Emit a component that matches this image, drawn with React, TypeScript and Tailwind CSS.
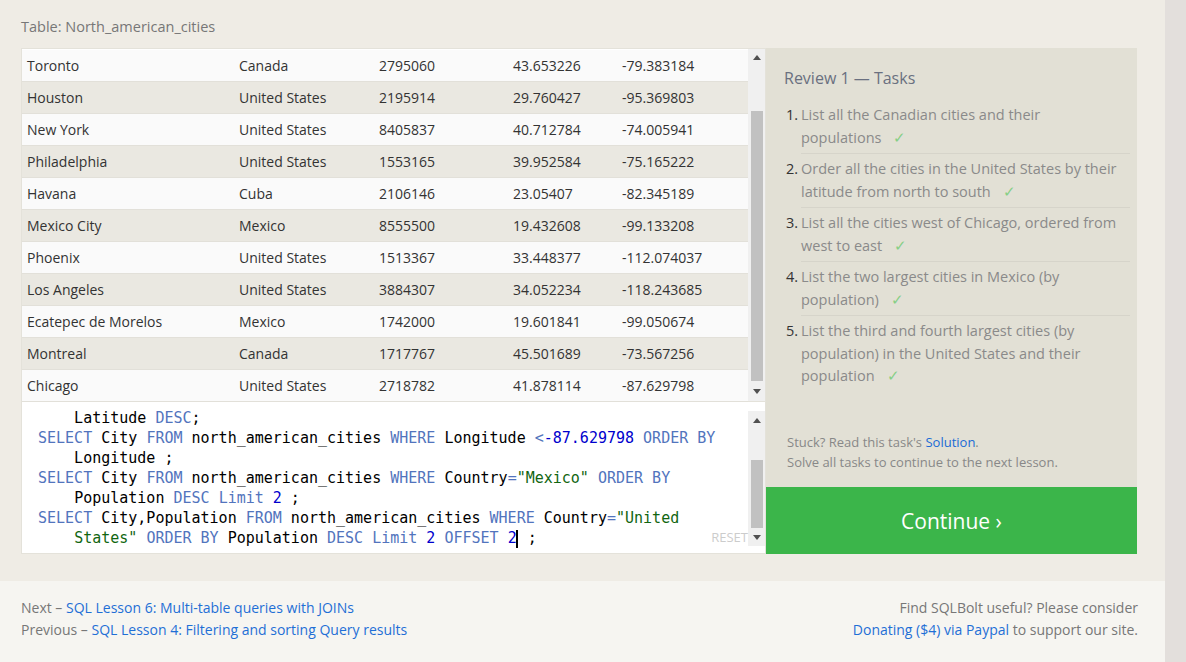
import React from "react";

type City = {
  name: string;
  country: string;
  population: string;
  latitude: string;
  longitude: string;
};

const cities: City[] = [
  { name: "Toronto", country: "Canada", population: "2795060", latitude: "43.653226", longitude: "-79.383184" },
  { name: "Houston", country: "United States", population: "2195914", latitude: "29.760427", longitude: "-95.369803" },
  { name: "New York", country: "United States", population: "8405837", latitude: "40.712784", longitude: "-74.005941" },
  { name: "Philadelphia", country: "United States", population: "1553165", latitude: "39.952584", longitude: "-75.165222" },
  { name: "Havana", country: "Cuba", population: "2106146", latitude: "23.05407", longitude: "-82.345189" },
  { name: "Mexico City", country: "Mexico", population: "8555500", latitude: "19.432608", longitude: "-99.133208" },
  { name: "Phoenix", country: "United States", population: "1513367", latitude: "33.448377", longitude: "-112.074037" },
  { name: "Los Angeles", country: "United States", population: "3884307", latitude: "34.052234", longitude: "-118.243685" },
  { name: "Ecatepec de Morelos", country: "Mexico", population: "1742000", latitude: "19.601841", longitude: "-99.050674" },
  { name: "Montreal", country: "Canada", population: "1717767", latitude: "45.501689", longitude: "-73.567256" },
  { name: "Chicago", country: "United States", population: "2718782", latitude: "41.878114", longitude: "-87.629798" },
];

const tasks: string[][] = [
  ["List all the Canadian cities and their", "populations"],
  ["Order all the cities in the United States by their", "latitude from north to south"],
  ["List all the cities west of Chicago, ordered from", "west to east"],
  ["List the two largest cities in Mexico (by", "population)"],
  ["List the third and fourth largest cities (by", "population) in the United States and their", "population"],
];

const sans = "font-['Open_Sans','Noto_Sans',sans-serif]";

// editor token helpers
const K = ({ children }: { children: React.ReactNode }) => (
  <span className="text-[#5274bd]">{children}</span>
);
const N = ({ children }: { children: React.ReactNode }) => (
  <span className="text-[#0000cd]">{children}</span>
);
const S = ({ children }: { children: React.ReactNode }) => (
  <span className="text-[#116611]">{children}</span>
);

function ArrowUp() {
  return (
    <svg width="8" height="5" viewBox="0 0 8 5">
      <path d="M0 5 L4 0 L8 5 Z" fill="#505050" />
    </svg>
  );
}

function ArrowDown({ color = "#505050" }: { color?: string }) {
  return (
    <svg width="8" height="5" viewBox="0 0 8 5">
      <path d="M0 0 L8 0 L4 5 Z" fill={color} />
    </svg>
  );
}

export default function App() {
  return (
    <div className={`w-[1186px] h-[662px] flex bg-[#e3dfdc] overflow-hidden ${sans}`}>
      <div className="w-[1165px] flex flex-col">
        <main className="bg-[#efece5] px-[21px] pt-[17px] pb-[27px]">
          <div className="text-[14.5px] leading-[20px] text-[#777] mb-[11px]">
            Table: North_american_cities
          </div>

          <div className="flex">
            {/* Left: table + editor */}
            <div className="w-[745px] border border-[#e4e2da] bg-white">
              {/* Table */}
              <div className="flex h-[353px] border-b border-[#e4e2da]">
                <div className="flex-1 pt-[1px]">
                  {cities.map((c, i) => (
                    <div
                      key={c.name}
                      className={`grid grid-cols-[212px_140px_134px_109px_1fr] h-[32px] items-center pl-[5px] text-[14px] text-[#333] border-b border-[#e2e0d9] ${
                        i % 2 === 0 ? "bg-[#fafafa]" : "bg-[#eae8e1]"
                      }`}
                    >
                      <span>{c.name}</span>
                      <span>{c.country}</span>
                      <span>{c.population}</span>
                      <span>{c.latitude}</span>
                      <span>{c.longitude}</span>
                    </div>
                  ))}
                </div>
                <div className="w-[17px] bg-[#f0f0f0] flex flex-col items-center">
                  <div className="h-[14px] flex items-center justify-center pt-[2px]">
                    <ArrowUp />
                  </div>
                  <div className="mt-[48px] w-[12px] h-[270px] bg-[#c1c1c1]" />
                  <div className="flex-1 flex items-center justify-center">
                    <ArrowDown />
                  </div>
                </div>
              </div>

              {/* Editor */}
              <div className="relative h-[151px] flex">
                <div className="flex-1 pl-[16px] pt-[6px] font-['DejaVu_Sans_Mono','Liberation_Mono',monospace] text-[15px] leading-[20px] text-black whitespace-pre">
                  <div>    Latitude <K>DESC</K>;</div>
                  <div>
                    <K>SELECT</K> City <K>FROM</K> north_american_cities <K>WHERE</K> Longitude{" "}
                    <K>&lt;</K>
                    <N>-87.629798</N> <K>ORDER BY</K>
                  </div>
                  <div>    Longitude ;</div>
                  <div>
                    <K>SELECT</K> City <K>FROM</K> north_american_cities <K>WHERE</K> Country
                    <K>=</K>
                    <S>"Mexico"</S> <K>ORDER BY</K>
                  </div>
                  <div>
                    {"    "}Population <K>DESC</K> <K>Limit</K> <N>2</N> ;
                  </div>
                  <div>
                    <K>SELECT</K> City,Population <K>FROM</K> north_american_cities <K>WHERE</K> Country
                    <K>=</K>
                    <S>"United</S>
                  </div>
                  <div>
                    {"    "}
                    <S>States"</S> <K>ORDER BY</K> Population <K>DESC</K> <K>Limit</K> <N>2</N>{" "}
                    <K>OFFSET</K> <N>2</N>
                    <span className="inline-block w-[2px] h-[18px] bg-black align-middle -ml-[1px] mr-[1px]" />
                    {" "};
                  </div>
                </div>
                <div className="absolute right-[17px] bottom-[7px] text-[13px] leading-[18px] text-[#cccccc]">
                  RESET
                </div>
                <div className="w-[17px] mt-[9px] mb-[7px] bg-[#f0f0f0] flex flex-col items-center">
                  <div className="h-[16px] flex items-center justify-center pt-[2px]">
                    <ArrowUp />
                  </div>
                  <div className="mt-[33px] w-[12px] h-[68px] bg-[#c1c1c1]" />
                  <div className="flex-1 flex items-center justify-center">
                    <ArrowDown />
                  </div>
                </div>
              </div>
            </div>

            {/* Right: tasks */}
            <div className="w-[371px] flex flex-col">
              <div className="flex-1 bg-[#e2e0d5] pl-[18px] pr-[7px] pt-[18px] pb-[15px] flex flex-col">
                <div className="text-[16px] leading-[24px] text-[#6a7080]">Review 1 — Tasks</div>
                <ol className="mt-[10px]">
                  {tasks.map((lines, i) => (
                    <li key={i} className="flex">
                      <span className="w-[17px] shrink-0 text-[14.5px] leading-[22.5px] text-[#333] pt-[4px] pl-[2px]">
                        {i + 1}.
                      </span>
                      <div
                        className={`flex-1 text-[14.5px] leading-[22.5px] text-[#8a8a8a] py-[4px] ${
                          i < tasks.length - 1 ? "border-b border-[#d6d4ca]" : ""
                        }`}
                      >
                        {lines.map((l, j) => (
                          <div key={j}>
                            {l}
                            {j === lines.length - 1 && (
                              <span className="ml-[12px] text-[#86cf86]">✓</span>
                            )}
                          </div>
                        ))}
                      </div>
                    </li>
                  ))}
                </ol>
                <div className="mt-auto pl-[3px] text-[13px] leading-[20px] text-[#888]">
                  <div>
                    Stuck? Read this task's <span className="text-[#1a6bd6]">Solution</span>.
                  </div>
                  <div>Solve all tasks to continue to the next lesson.</div>
                </div>
              </div>
              <div className="h-[67px] bg-[#3bb54a] flex items-center justify-center text-white text-[21px] pt-[3px]">
                Continue ›
              </div>
            </div>
          </div>
        </main>

        <footer className="flex-1 bg-[#f6f5f1] pl-[21px] pr-[27px] pt-[16px] flex justify-between text-[14px] leading-[22px] text-[#777]">
          <div>
            <div>
              Next – <span className="text-[#1f6fd6]">SQL Lesson 6: Multi-table queries with JOINs</span>
            </div>
            <div>
              Previous – <span className="text-[#1f6fd6]">SQL Lesson 4: Filtering and sorting Query results</span>
            </div>
          </div>
          <div className="text-right">
            <div>Find SQLBolt useful? Please consider</div>
            <div>
              <span className="text-[#1f6fd6]">Donating ($4) via Paypal</span> to support our site.
            </div>
          </div>
        </footer>
      </div>
    </div>
  );
}
